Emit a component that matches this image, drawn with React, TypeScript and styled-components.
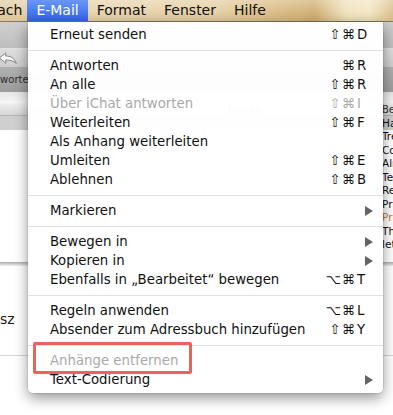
import styled, { createGlobalStyle } from "styled-components";

type Entry = {
    label?: string;
    mods?: string;
    keyName?: string;
    disabled?: boolean;
    submenu?: boolean;
    sep?: boolean;
};

const entries: Entry[] = [
    { label: 'Erneut senden', mods: '⇧⌘', keyName: 'D' },
    { sep: true },
    { label: 'Antworten', mods: '⌘', keyName: 'R' },
    { label: 'An alle', mods: '⇧⌘', keyName: 'R' },
    { label: 'Über iChat antworten', mods: '⇧⌘', keyName: 'I', disabled: true },
    { label: 'Weiterleiten', mods: '⇧⌘', keyName: 'F' },
    { label: 'Als Anhang weiterleiten' },
    { label: 'Umleiten', mods: '⇧⌘', keyName: 'E' },
    { label: 'Ablehnen', mods: '⇧⌘', keyName: 'B' },
    { sep: true },
    { label: 'Markieren', submenu: true },
    { sep: true },
    { label: 'Bewegen in', submenu: true },
    { label: 'Kopieren in', submenu: true },
    { label: 'Ebenfalls in „Bearbeitet“ bewegen', mods: '⌥⌘', keyName: 'T' },
    { sep: true },
    { label: 'Regeln anwenden', mods: '⌥⌘', keyName: 'L' },
    { label: 'Absender zum Adressbuch hinzufügen', mods: '⇧⌘', keyName: 'Y' },
    { sep: true },
    { label: 'Anhänge entfernen', disabled: true },
    { label: 'Text-Codierung', submenu: true },
];

// subjects of the message list, only their first letters peek out right of the menu
const messages = [
    { subject: 'Hallo zusammen', selected: true },
    { subject: 'Treffen am Montag' },
    { subject: 'Correct version' },
    { subject: 'Already sent' },
    { subject: 'Termin' },
    { subject: 'Re: Termin' },
    { subject: 'Print job' },
    { subject: 'Print job', flagged: true },
    { subject: 'Thanks!' },
    { subject: 'let me know' },
];

export default function App() {
    return (
        <Screen>
            <GlobalStyle />
            <MenuBar>
                <BarItem $offset={-46} $trim>Postfach</BarItem>
                <BarItem $active>E-Mail</BarItem>
                <BarItem>Format</BarItem>
                <BarItem>Fenster</BarItem>
                <BarItem>Hilfe</BarItem>
            </MenuBar>

            <Window>
                <ToolbarTop />
                <ButtonRow>
                    <ReplyIcon viewBox="0 0 20 14">
                        <path d="M0.5 6.5 L7.5 0.8 V4.3 C12.5 4.3 17 6 19.3 12.5 C16.2 9.4 12.5 8.6 7.5 8.6 V12.2 Z" fill="#fbfbfb" stroke="#7a7a7a" strokeWidth="1" strokeLinejoin="round" />
                    </ReplyIcon>
                </ButtonRow>
                <LabelRow>
                    <ToolLabel>Antworten</ToolLabel>
                </LabelRow>
                <ToolbarFade />
                <ListHeader>
                    <Cell />
                    <Cell>Von</Cell>
                    <Cell>Datum</Cell>
                    <Cell>Betreff</Cell>
                </ListHeader>
                <ListBody>
                    {messages.map((m, i) => (
                        <ListRow key={i} $selected={m.selected}>
                            <Cell />
                            <Cell />
                            <Cell />
                            <Subject $flagged={m.flagged}>{m.subject}</Subject>
                        </ListRow>
                    ))}
                </ListBody>
                <Splitter />
                <PreviewHeader>
                    <FromName>sz</FromName>
                </PreviewHeader>
                <PreviewBody />
            </Window>

            <Menu>
                {entries.map((e, i) =>
                    e.sep ? (
                        <Separator key={i} />
                    ) : (
                        <Item key={i} $disabled={e.disabled}>
                            <Label>{e.label}</Label>
                            {e.keyName && (
                                <Shortcut>
                                    <Mods>{e.mods}</Mods>
                                    <KeyName>{e.keyName}</KeyName>
                                </Shortcut>
                            )}
                            {e.submenu && <Arrow />}
                        </Item>
                    )
                )}
            </Menu>

            <Highlight />
        </Screen>
    )
}


const GlobalStyle = createGlobalStyle`
    html, body {
        margin: 0;
        padding: 0;
        background: #fff;
    }
    body {
        font-family: "DejaVu Sans", "Noto Sans", sans-serif;
    }
`;

const Screen = styled.div`
    position: relative;
    width: 393px;
    height: 415px;
    overflow: hidden;
    background: #fff;
`;

const MenuBar = styled.div`
    display: flex;
    height: 21px;
    border-bottom: 1px solid #8c7a58;
    background:
        linear-gradient(180deg, rgba(255, 255, 255, 0.28) 0%, rgba(255, 255, 255, 0) 60%, rgba(120, 90, 40, 0.08) 100%),
        linear-gradient(90deg, #e2cea5 0%, #e8d6b0 25%, #e5d0a5 55%, #d8ba80 74%, #d2b076 80%, #f1e3bf 88%, #f4e8c7 94%, #dcc290 100%);
`;

const BarItem = styled.div<{ $active?: boolean; $offset?: number; $trim?: boolean }>`
    margin-left: ${p => p.$offset ?? 0}px;
    padding: 0 ${p => p.$trim ? 5 : 9}px 0 9px;
    font-size: 14px;
    line-height: 21px;
    color: ${p => p.$active ? '#fff' : '#111'};
    background: ${p => p.$active ? 'linear-gradient(180deg, #6b98f6 0%, #4b7ef0 50%, #3262e4 100%)' : 'transparent'};
    white-space: nowrap;
`;

const Window = styled.div`
    display: flex;
    flex-direction: column;
`;

const ToolbarTop = styled.div`
    height: 26px;
    background: linear-gradient(180deg, #cfcfcf 0%, #bebebe 100%);
    border-bottom: 1px solid #e2e2e2;
`;

const ButtonRow = styled.div`
    height: 18px;
    display: flex;
    align-items: center;
    background: linear-gradient(180deg, #dedede 0%, #cdcdcd 100%);
`;

const ReplyIcon = styled.svg`
    width: 18px;
    height: 13px;
    margin-left: -1px;
`;

const LabelRow = styled.div`
    height: 25px;
    display: flex;
    align-items: center;
    background: linear-gradient(180deg, #b0b0b0 0%, #9c9c9c 100%);
`;

const ToolLabel = styled.span`
    margin-left: -17px;
    font-size: 10px;
    color: #2a2a2a;
`;

const ToolbarFade = styled.div`
    height: 11px;
    background: linear-gradient(180deg, #e6e6e6 0%, #f6f6f6 100%);
`;

const columns = `28px 200px 154px 1fr`;

const ListHeader = styled.div`
    display: grid;
    grid-template-columns: ${columns};
    height: 12px;
    align-items: center;
    font-size: 10px;
    color: #333;
    background: linear-gradient(180deg, #f0f0f0 0%, #d6d6d6 100%);
    border-bottom: 1px solid #b4b4b4;
    white-space: nowrap;
    overflow: hidden;
`;

const Cell = styled.div`
    overflow: hidden;
`;

const ListBody = styled.div`
    height: 146px;
    display: flex;
    flex-direction: column;
`;

const ListRow = styled.div<{ $selected?: boolean }>`
    display: grid;
    grid-template-columns: ${columns};
    height: 13.5px;
    align-items: center;
    font-size: 10.5px;
    background: ${p => p.$selected ? '#cfcfcf' : '#fff'};
`;

const Subject = styled.div<{ $flagged?: boolean }>`
    white-space: nowrap;
    overflow: hidden;
    color: ${p => p.$flagged ? '#c27a34' : '#111'};
`;

const Splitter = styled.div`
    height: 4px;
    background: linear-gradient(180deg, #a9a9a9 0%, #c9c9c9 40%, #efefef 100%);
`;

const PreviewHeader = styled.div`
    height: 90px;
    box-sizing: border-box;
    padding-top: 43px;
    border-bottom: 1px solid #d6d6d6;
`;

const FromName = styled.span`
    font-size: 14px;
    line-height: 16px;
    color: #1c1c1c;
`;

const PreviewBody = styled.div`
    flex: 1;
    background: #fff;
`;

const Menu = styled.div`
    position: absolute;
    left: 28px;
    top: 22px;
    width: 355px;
    padding: 3px 0 4px;
    background: rgba(255, 255, 255, 0.98);
    border-radius: 0 0 5px 5px;
    box-shadow: 0 5px 14px rgba(0, 0, 0, 0.42), 0 0 0 0.5px rgba(0, 0, 0, 0.15);
    font-size: 13.3px;
`;

const Item = styled.div<{ $disabled?: boolean }>`
    display: flex;
    align-items: center;
    height: 19px;
    padding: 0 13px 0 22px;
    color: ${p => p.$disabled ? '#a9a9a9' : '#111'};
    white-space: nowrap;
`;

const Label = styled.span`
    flex: 1;
`;

const Shortcut = styled.span`
    display: flex;
    align-items: center;
`;

const Mods = styled.span`
    text-align: right;
    letter-spacing: 1px;
`;

const KeyName = styled.span`
    width: 13px;
    padding-left: 1px;
`;

const Arrow = styled.span`
    width: 0;
    height: 0;
    margin-right: -3px;
    border-left: 8px solid #646464;
    border-top: 5px solid transparent;
    border-bottom: 5px solid transparent;
`;

const Separator = styled.div`
    height: 12px;
    display: flex;
    align-items: center;

    &::after {
        content: "";
        flex: 1;
        height: 1px;
        background: #e1e1e1;
    }
`;

/* red annotation frame drawn over the menu */
const Highlight = styled.div`
    position: absolute;
    left: 33px;
    top: 342px;
    width: 159px;
    height: 32px;
    box-sizing: border-box;
    border: 3px solid #e5675b;
    border-radius: 2px;
`;
